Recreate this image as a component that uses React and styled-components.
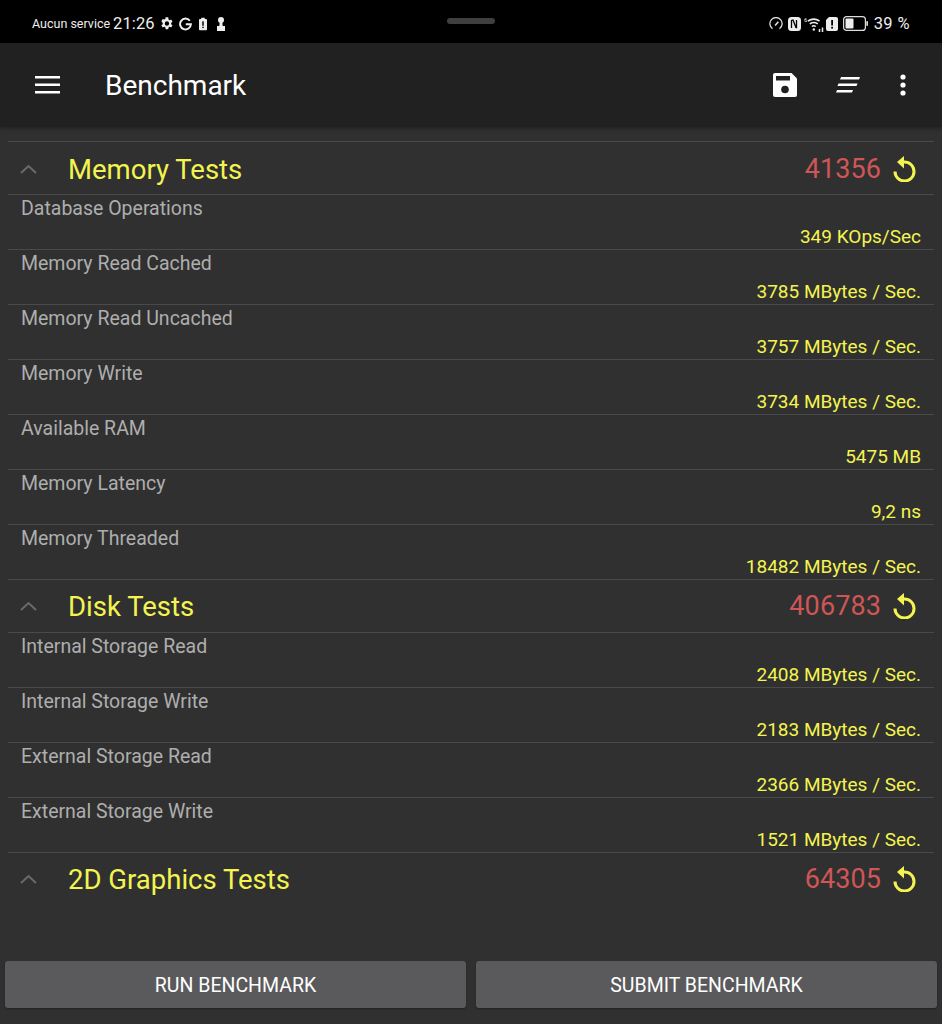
import React from 'react'
import styled, { createGlobalStyle } from 'styled-components'

const GlobalStyle = createGlobalStyle`
    html, body {
        background:  #303030;
        font-family: Roboto, "Liberation Sans", sans-serif;
        margin:      0;
        padding:     0;
    }
`

const Page = styled.div`
    background:     #303030;
    display:        flex;
    flex-direction: column;
    height:         1024px;
    overflow:       hidden;
    width:          942px;
`

const StatusBar = styled.div`
    align-items:     center;
    background:      #000;
    box-sizing:      border-box;
    color:           #eee;
    display:         grid;
    flex:            none;
    grid-template-columns: 1fr auto 1fr;
    height:          43px;
    padding:         4px 32px 0 32px;
`

const StatusLeft = styled.div`
    align-items: center;
    display:     flex;
`

const StatusRight = styled.div`
    align-items:     center;
    display:         flex;
    justify-content: flex-end;
`

const Carrier = styled.span`
    font-size:    12.5px;
    margin-right: 3px;
`

const Clock = styled.span`
    font-size:      16.5px;
    letter-spacing: 0.1px;
    margin-right:   4px;
`

const Pill = styled.div`
    background:    #3f3f3f;
    border-radius: 3px;
    height:        6px;
    margin-bottom: 5px;
    width:         48px;
`

const BatteryText = styled.span`
    font-size:      16.5px;
    letter-spacing: 0.4px;
    margin-left:    6px;
`

const StatusIcon = styled.svg`
    display:     block;
    flex:        none;
    margin-left: ${props => props.$gap || 0}px;
`

const AppBar = styled.div`
    align-items: center;
    background:  #212121;
    box-shadow:  0 2px 4px rgba(0, 0, 0, 0.25);
    box-sizing:  border-box;
    display:     flex;
    flex:        none;
    height:      84px;
    padding:     0 36px 0 35px;
    position:    relative;
`

const Title = styled.div`
    color:       #fff;
    flex:        1;
    font-size:   28px;
    margin-left: 45px;
    padding-top: 1px;
`

const ActionIcon = styled.svg`
    display:     block;
    flex:        none;
    margin-left: ${props => props.$gap || 0}px;
`

const List = styled.div`
    display:        flex;
    flex:           1;
    flex-direction: column;
    padding:        14px 8px 0 8px;
`

const GroupHeader = styled.div`
    align-items:   center;
    border-bottom: ${props => props.$open ? '1px solid #4a4a4a' : '1px solid transparent'};
    border-top:    ${props => props.$first ? '1px solid #4a4a4a' : 'none'};
    box-sizing:    border-box;
    display:       flex;
    height:        ${props => props.$first ? 54 : 53}px;
    padding:       ${props => props.$first ? 2 : 0}px 18px 0 12px;
`

const Chevron = styled.svg`
    display: block;
    flex:    none;
`

const GroupTitle = styled.div`
    color:       #f4f451;
    flex:        1;
    font-size:   27.5px;
    margin-left: 31px;
`

const GroupScore = styled.div`
    color:          #cf5656;
    font-size:      27px;
    letter-spacing: 0.1px;
    margin-right:   12px;
`

const Row = styled.div`
    border-bottom:  1px solid #4a4a4a;
    box-sizing:     border-box;
    display:        flex;
    flex-direction: column;
    height:         55px;
    padding:        3px 13px 0 13px;
`

const RowName = styled.div`
    color:       #aeaeae;
    font-size:   19.5px;
    line-height: 22px;
`

const RowValue = styled.div`
    color:       #f4f451;
    font-size:   19px;
    line-height: 22px;
    margin-top:  6px;
    text-align:  right;
`

const Footer = styled.div`
    display: flex;
    flex:    none;
    gap:     10px;
    padding: 0 5px 16px 5px;
`

const FooterButton = styled.button`
    background:    #5a5a5c;
    border:        none;
    border-radius: 3px;
    box-shadow:    0 1px 2px rgba(0, 0, 0, 0.3);
    color:         #fff;
    flex:          1;
    font-family:   inherit;
    font-size:     19.5px;
    height:        47px;
    padding:       2px 0 0 0;
`

const Gear = () => (
    <StatusIcon width="15" height="15" viewBox="0 0 24 24" fill="#eee">
        <path d="M19.4 13a7.5 7.5 0 0 0 0-2l2.2-1.7-2.1-3.6-2.6 1a7.6 7.6 0 0 0-1.7-1L14.8 2h-4.2l-.4 2.7a7.6 7.6 0 0 0-1.700 1l-2.600-1-2.100 3.600L6 11a7.500 7.500 0 0 0 0 2l-2.200 1.700 2.100 3.600 2.600-1a7.600 7.600 0 0 0 1.700 1l.4 2.700h4.200l.4-2.700a7.600 7.600 0 0 0 1.700-1l2.600 1 2.100-3.600zM12.700 15.500a3.500 3.500 0 1 1 0-7 3.500 3.500 0 0 1 0 7z" />
    </StatusIcon>
)

const GoogleG = () => (
    <StatusIcon $gap={5} width="13" height="14" viewBox="0 0 24 24" fill="none" stroke="#eee" strokeWidth="3.6">
        <path d="M20 6a10 10 0 1 0 2 6.500H12.500" />
    </StatusIcon>
)

const SmallBattery = () => (
    <StatusIcon $gap={7} width="8" height="14" viewBox="0 0 9 14">
        <path d="M2.500 0h4v1.500H8a1 1 0 0 1 1 1V13a1 1 0 0 1-1 1H1a1 1 0 0 1-1-1V2.500a1 1 0 0 1 1-1h1.500z" fill="#eee" />
        <rect x="3.700" y="4" width="1.600" height="5" fill="#000" />
        <rect x="3.700" y="10" width="1.600" height="1.600" fill="#000" />
    </StatusIcon>
)

const Keyhole = () => (
    <StatusIcon $gap={10} width="8" height="14" viewBox="0 0 8 14" fill="#eee">
        <circle cx="4" cy="3" r="3" />
        <path d="M2.800 4h2.400l.5 5H8v5H0V9h2.300z" />
    </StatusIcon>
)

const Gauge = () => (
    <StatusIcon width="14" height="14" viewBox="0 0 24 24" fill="none" stroke="#ddd" strokeWidth="2.200">
        <path d="M6 20a10.500 10.500 0 1 1 12 0" />
        <path d="M10.500 14.500 16 8" strokeWidth="2.800" />
    </StatusIcon>
)

const Nfc = () => (
    <StatusIcon $gap={5} width="13" height="14" viewBox="0 0 13 14">
        <rect x="0" y="0" width="13" height="14" rx="3.500" fill="#eee" />
        <path d="M3.500 11V3.500l1.500-.5 3 7.500.5 0V3" fill="none" stroke="#000" strokeWidth="1.300" />
    </StatusIcon>
)

const WifiLabel = styled.text`
    fill:        #eee;
    font-family: Roboto, sans-serif;
    font-size:   6px;
`

const Wifi = () => (
    <StatusIcon $gap={3} width="20" height="16" viewBox="0 0 20 16" fill="none" stroke="#eee" strokeWidth="1.500">
        <WifiLabel x="0" y="6" stroke="none">6</WifiLabel>
        <path d="M4 5a10.500 10.500 0 0 1 11.500 0" />
        <path d="M5.800 7.800a7.500 7.500 0 0 1 8 0" />
        <path d="M7.800 10.500a3.500 3.500 0 0 1 4 0" />
        <circle cx="9.800" cy="13.500" r="1.200" fill="#eee" stroke="none" />
        <path d="M15.500 13v3M18.500 11.500V16" />
    </StatusIcon>
)

const Alert = () => (
    <StatusIcon $gap={2} width="12" height="14" viewBox="0 0 12 14">
        <path d="M3 0h7a2 2 0 0 1 2 2v10a2 2 0 0 1-2 2H2a2 2 0 0 1-2-2V3z" fill="#eee" />
        <rect x="5.200" y="3" width="1.800" height="5.500" fill="#000" />
        <rect x="5.200" y="9.800" width="1.800" height="1.800" fill="#000" />
    </StatusIcon>
)

const Battery = () => (
    <StatusIcon $gap={5} width="25" height="15" viewBox="0 0 25 15">
        <rect x=".6" y=".6" width="21.800" height="13.800" rx="3" fill="none" stroke="#ddd" strokeWidth="1.200" />
        <rect x="2.500" y="2.500" width="8" height="10" rx="1" fill="#eee" />
        <rect x="23.300" y="5" width="1.700" height="5" rx=".8" fill="#ddd" />
    </StatusIcon>
)

const Menu = () => (
    <ActionIcon width="25" height="18" viewBox="0 0 25 18" fill="#fff">
        <rect y="0" width="25" height="2.500" />
        <rect y="7.500" width="25" height="2.500" />
        <rect y="15" width="25" height="2.500" />
    </ActionIcon>
)

const Save = () => (
    <ActionIcon width="24" height="24" viewBox="0 0 24 24">
        <path d="M2 0h16.500L24 5.500V22a2 2 0 0 1-2 2H2a2 2 0 0 1-2-2V2a2 2 0 0 1 2-2z" fill="#fff" />
        <rect x="3" y="3" width="14" height="4.500" fill="#212121" />
        <circle cx="12" cy="16.500" r="3.800" fill="#212121" />
    </ActionIcon>
)

const Sort = () => (
    <ActionIcon $gap={39} width="24" height="16" viewBox="0 0 24 16" fill="#fff">
        <path d="M5 0h19l-1 2.500H4z" />
        <path d="M2.500 6.500h19l-1 2.500h-19z" />
        <path d="M1 13h16l-1 2.500H0z" />
    </ActionIcon>
)

const More = () => (
    <ActionIcon $gap={40} width="6" height="22" viewBox="0 0 6 22" fill="#fff">
        <circle cx="3" cy="3" r="2.600" />
        <circle cx="3" cy="11" r="2.600" />
        <circle cx="3" cy="19" r="2.600" />
    </ActionIcon>
)

const Up = () => (
    <Chevron width="17" height="10" viewBox="0 0 17 10" fill="none" stroke="#6a6a6a" strokeWidth="2">
        <path d="M1 9l7.500-7 7.500 7" />
    </Chevron>
)

const Reload = () => (
    <svg width="23" height="26" viewBox="0 0 23 26" fill="none" style={{ display: 'block' }}>
        <path d="M10 6h1.500a9.500 9.500 0 1 1-9.500 9.500" stroke="#f4f451" strokeWidth="3" />
        <path d="M11 0v12.500L4 6z" fill="#f4f451" />
    </svg>
)

const groups = [
    {
        title: 'Memory Tests',
        score: '41356',
        rows: [
            ['Database Operations', '349 KOps/Sec'],
            ['Memory Read Cached', '3785 MBytes / Sec.'],
            ['Memory Read Uncached', '3757 MBytes / Sec.'],
            ['Memory Write', '3734 MBytes / Sec.'],
            ['Available RAM', '5475 MB'],
            ['Memory Latency', '9,2 ns'],
            ['Memory Threaded', '18482 MBytes / Sec.'],
        ],
    },
    {
        title: 'Disk Tests',
        score: '406783',
        rows: [
            ['Internal Storage Read', '2408 MBytes / Sec.'],
            ['Internal Storage Write', '2183 MBytes / Sec.'],
            ['External Storage Read', '2366 MBytes / Sec.'],
            ['External Storage Write', '1521 MBytes / Sec.'],
        ],
    },
    {
        title: '2D Graphics Tests',
        score: '64305',
        rows: [],
    },
]

const App = () => (
    <Page>
        <GlobalStyle />
        <StatusBar>
            <StatusLeft>
                <Carrier>Aucun service</Carrier>
                <Clock>21:26</Clock>
                <Gear />
                <GoogleG />
                <SmallBattery />
                <Keyhole />
            </StatusLeft>
            <Pill />
            <StatusRight>
                <Gauge />
                <Nfc />
                <Wifi />
                <Alert />
                <Battery />
                <BatteryText>39 %</BatteryText>
            </StatusRight>
        </StatusBar>

        <AppBar>
            <Menu />
            <Title>Benchmark</Title>
            <Save />
            <Sort />
            <More />
        </AppBar>

        <List>
        {
            groups.map((group, index) => (
                <div key={group.title}>
                    <GroupHeader $first={index === 0} $open={group.rows.length > 0}>
                        <Up />
                        <GroupTitle>{group.title}</GroupTitle>
                        <GroupScore>{group.score}</GroupScore>
                        <Reload />
                    </GroupHeader>
                    {
                        group.rows.map(([name, value]) => (
                            <Row key={name}>
                                <RowName>{name}</RowName>
                                <RowValue>{value}</RowValue>
                            </Row>
                        ))
                    }
                </div>
            ))
        }
        </List>

        <Footer>
            <FooterButton>RUN BENCHMARK</FooterButton>
            <FooterButton>SUBMIT BENCHMARK</FooterButton>
        </Footer>
    </Page>
)

export default App
